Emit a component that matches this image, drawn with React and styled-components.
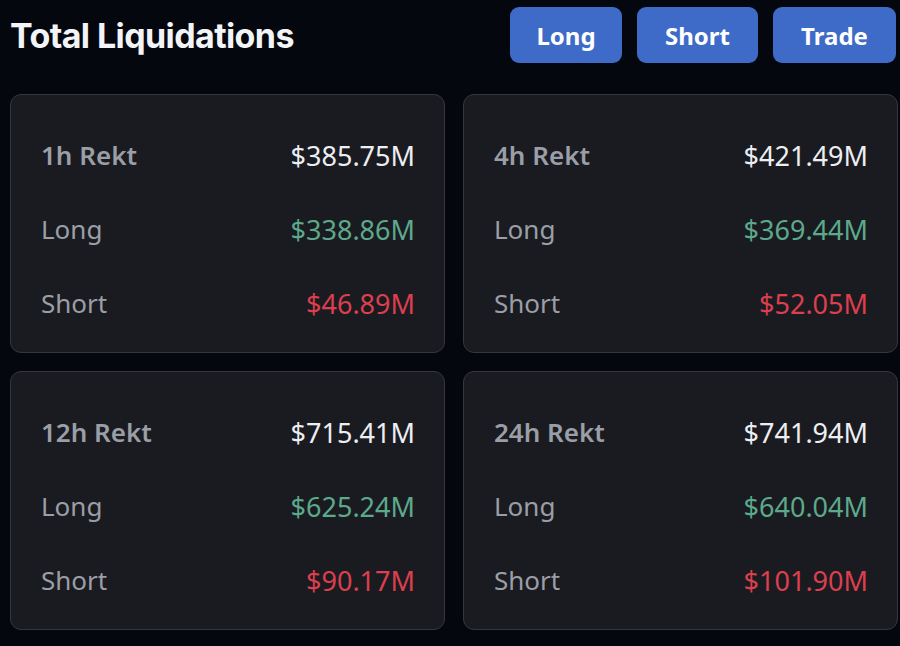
import React from "react";
import styled, { createGlobalStyle } from "styled-components";

const GlobalStyle = createGlobalStyle`
  html, body {
    margin: 0;
    padding: 0;
    background: #05070f;
  }
  body {
    font-family: "Noto Sans", "Open Sans", sans-serif;
  }
`;

const data = [
  { period: "1h", total: "$385.75M", long: "$338.86M", short: "$46.89M" },
  { period: "4h", total: "$421.49M", long: "$369.44M", short: "$52.05M" },
  { period: "12h", total: "$715.41M", long: "$625.24M", short: "$90.17M" },
  { period: "24h", total: "$741.94M", long: "$640.04M", short: "$101.90M" },
];

const Page = styled.div`
  width: 900px;
  height: 646px;
  box-sizing: border-box;
  padding: 7px 4px 0 10px;
  display: flex;
  flex-direction: column;
  gap: 31px;
`;

const Header = styled.div`
  display: flex;
  align-items: center;
  justify-content: space-between;
  height: 56px;
`;

const Title = styled.h1`
  margin: 0;
  font-family: Inter, "Liberation Sans", sans-serif;
  font-weight: 700;
  font-size: 34px;
  letter-spacing: -0.6px;
  color: #f3f4f7;
`;

const Actions = styled.div`
  display: flex;
  gap: 15px;
`;

const ActionButton = styled.button`
  height: 56px;
  width: ${(p) => p.$w}px;
  padding: 0;
  border: none;
  border-radius: 9px;
  background: #3e6bc7;
  color: #ffffff;
  font-family: "Noto Sans", sans-serif;
  font-weight: 700;
  font-size: 24px;
  cursor: pointer;
`;

const Grid = styled.div`
  display: grid;
  grid-template-columns: 435px 435px;
  column-gap: 18px;
  row-gap: 18px;
`;

const Card = styled.div`
  height: 259px;
  box-sizing: border-box;
  padding: 23px 29px 11px 30px;
  background: #1a1b20;
  border: 1px solid #35373c;
  border-radius: 11px;
  display: flex;
  flex-direction: column;
`;

const Row = styled.div`
  height: 74px;
  display: flex;
  align-items: center;
  justify-content: space-between;
  font-size: 26px;
`;

const Label = styled.span`
  color: #9a9ea6;
  font-weight: ${(p) => (p.$bold ? 600 : 400)};
`;

const Value = styled.span`
  font-size: 27px;
  color: ${(p) =>
    p.$tone === "long" ? "#5ca98b" : p.$tone === "short" ? "#dc3f4d" : "#eceef2"};
`;

export default function App() {
  return (
    <>
      <GlobalStyle />
      <Page>
        <Header>
          <Title>Total Liquidations</Title>
          <Actions>
            <ActionButton $w={112}>Long</ActionButton>
            <ActionButton $w={121}>Short</ActionButton>
            <ActionButton $w={123}>Trade</ActionButton>
          </Actions>
        </Header>
        <Grid>
          {data.map((d) => (
            <Card key={d.period}>
              <Row>
                <Label $bold>{d.period} Rekt</Label>
                <Value>{d.total}</Value>
              </Row>
              <Row>
                <Label>Long</Label>
                <Value $tone="long">{d.long}</Value>
              </Row>
              <Row>
                <Label>Short</Label>
                <Value $tone="short">{d.short}</Value>
              </Row>
            </Card>
          ))}
        </Grid>
      </Page>
    </>
  );
}
